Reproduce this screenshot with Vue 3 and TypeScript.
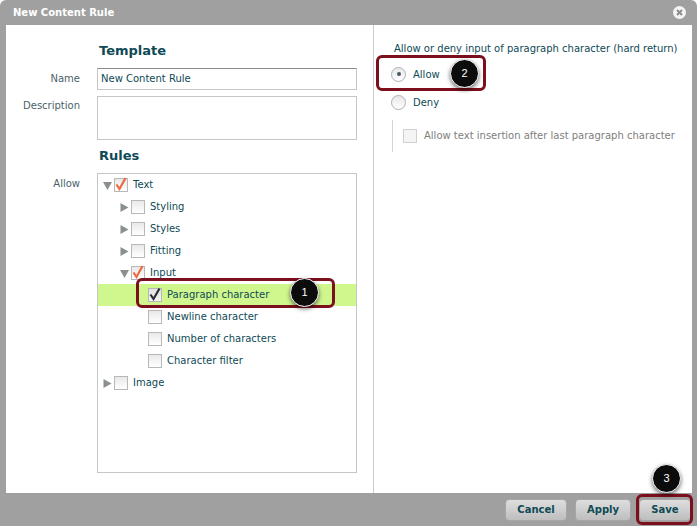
<script setup lang="ts">
interface TreeRow {
  label: string;
  depth: number;
  arrow: 'open' | 'closed' | 'none';
  check: 'none' | 'orange' | 'dark';
  active?: boolean;
}

const rows: TreeRow[] = [
  { label: 'Text', depth: 0, arrow: 'open', check: 'orange' },
  { label: 'Styling', depth: 1, arrow: 'closed', check: 'none' },
  { label: 'Styles', depth: 1, arrow: 'closed', check: 'none' },
  { label: 'Fitting', depth: 1, arrow: 'closed', check: 'none' },
  { label: 'Input', depth: 1, arrow: 'open', check: 'orange' },
  { label: 'Paragraph character', depth: 2, arrow: 'none', check: 'dark', active: true },
  { label: 'Newline character', depth: 2, arrow: 'none', check: 'none' },
  { label: 'Number of characters', depth: 2, arrow: 'none', check: 'none' },
  { label: 'Character filter', depth: 2, arrow: 'none', check: 'none' },
  { label: 'Image', depth: 0, arrow: 'closed', check: 'none' },
];

const indent = (depth: number) => ({ paddingLeft: `${5 + depth * 17}px` });
</script>

<template>
  <div class="dialog">
    <header class="titlebar">
      <span class="title">New Content Rule</span>
      <svg class="close" width="13" height="13" viewBox="0 0 13 13">
        <circle cx="6.5" cy="6.5" r="6.5" fill="#f4f4f4" />
        <path d="M4 4l5 5M9 4l-5 5" stroke="#8c8c8c" stroke-width="2" />
      </svg>
    </header>

    <main class="body">
      <section class="left">
        <h2 class="heading">Template</h2>
        <div class="field">
          <label class="label">Name</label>
          <input class="input" value="New Content Rule" />
        </div>
        <div class="field field-desc">
          <label class="label">Description</label>
          <div class="textarea"></div>
        </div>
        <h2 class="heading heading-rules">Rules</h2>
        <div class="field">
          <label class="label">Allow</label>
          <div class="tree">
            <div
              v-for="row in rows"
              :key="row.label"
              class="row"
              :class="{ active: row.active }"
              :style="indent(row.depth)"
            >
              <span class="arrow-slot">
                <svg v-if="row.arrow === 'open'" width="9" height="9" viewBox="0 0 9 9">
                  <path d="M0 1h9L4.5 9z" fill="#8a9090" />
                </svg>
                <svg v-else-if="row.arrow === 'closed'" width="9" height="9" viewBox="0 0 9 9">
                  <path d="M0.5 0v9l8-4.5z" fill="#8a9090" />
                </svg>
              </span>
              <span class="box" :class="{ 'box-dark': row.check === 'dark' }">
                <svg v-if="row.check === 'orange'" width="14" height="14" viewBox="0 0 14 14">
                  <path d="M2.5 6.5l3 4.5L11.5 0" fill="none" stroke="#f0683f" stroke-width="2.2" />
                </svg>
                <svg v-else-if="row.check === 'dark'" width="14" height="14" viewBox="0 0 14 14">
                  <path d="M2.5 6.5l3 4.5L11.5 0.5" fill="none" stroke="#2b2f33" stroke-width="2.2" />
                </svg>
              </span>
              <span class="row-label">{{ row.label }}</span>
            </div>
          </div>
        </div>
      </section>

      <section class="right">
        <p class="question">Allow or deny input of paragraph character (hard return)</p>
        <div class="radio-row">
          <span class="radio"><i class="dot"></i></span>
          <span>Allow</span>
        </div>
        <div class="radio-row radio-deny">
          <span class="radio"></span>
          <span>Deny</span>
        </div>
        <div class="sub">
          <span class="box box-off"></span>
          <span class="sub-label">Allow text insertion after last paragraph character</span>
        </div>
      </section>
    </main>

    <footer class="footer">
      <button class="btn btn-cancel">Cancel</button>
      <button class="btn btn-apply">Apply</button>
      <button class="btn btn-save">Save</button>
    </footer>

    <!-- callouts sit on top of the screen -->
    <div class="outline o1"></div>
    <div class="outline o2"></div>
    <div class="outline o3"></div>
    <div class="badge b1">1</div>
    <div class="badge b2">2</div>
    <div class="badge b3">3</div>
  </div>
</template>

<style>
html,
body {
  margin: 0;
  background: #fff;
  overflow: hidden;
}
</style>

<style scoped>
.dialog {
  position: relative;
  width: 697px;
  height: 526px;
  display: flex;
  flex-direction: column;
  background: #a0a0a0;
  border-radius: 6px 6px 0 0;
  overflow: hidden;
  font-family: "DejaVu Sans", Verdana, sans-serif;
  font-size: 10px;
  color: #0e4a55;
}

.titlebar {
  height: 25px;
  flex: none;
  display: flex;
  align-items: center;
  justify-content: space-between;
  padding: 0 11px 0 13px;
}

.title {
  color: #fff;
  font-weight: bold;
  font-size: 10px;
}

.body {
  height: 468px;
  flex: none;
  margin: 0 5px 0 6px;
  display: flex;
  background: #fff;
}

.left {
  width: 368px;
  flex: none;
  box-sizing: border-box;
  padding: 18px 16px 0 0;
  border-right: 1px solid #cccccc;
}

.heading {
  margin: 0 0 10px 93px;
  height: 15px;
  line-height: 15px;
  font-size: 13px;
  font-weight: bold;
  color: #0e4a55;
}

.heading-rules {
  margin-top: 8px;
  margin-bottom: 10px;
}

.field {
  display: flex;
  gap: 17px;
  align-items: flex-start;
}

.field-desc {
  margin-top: 6px;
}

.label {
  width: 74px;
  flex: none;
  text-align: right;
  color: #4a6268;
  line-height: 22px;
}

.field-desc .label {
  line-height: 20px;
}

.input {
  width: 260px;
  height: 22px;
  box-sizing: border-box;
  border: 1px solid #c6c6c6;
  border-top-color: #8c8c8c;
  padding: 0 3px 2px;
  font: inherit;
  color: #0e4a55;
  outline: none;
}

.textarea {
  width: 260px;
  height: 44px;
  box-sizing: border-box;
  border: 1px solid #c6c6c6;
}

.tree {
  width: 260px;
  height: 300px;
  box-sizing: border-box;
  border: 1px solid #c6c6c6;
}

.row {
  height: 22px;
  display: flex;
  align-items: center;
}

.row.active {
  background: #d0f78e;
}

.arrow-slot {
  width: 11px;
  flex: none;
  display: flex;
  align-items: center;
}

.box {
  width: 14px;
  height: 14px;
  flex: none;
  box-sizing: border-box;
  border: 1px solid #b8b8b8;
  background: linear-gradient(#e9e9e9, #ffffff);
  display: flex;
  align-items: center;
  justify-content: center;
}

.box svg {
  flex: none;
  overflow: visible;
}

.box-dark {
  background: linear-gradient(#e2e2e2, #f4f4f4);
}

.row-label {
  margin-left: 5px;
  margin-top: -2px;
  white-space: nowrap;
}

.right {
  flex: 1;
  min-width: 0;
  padding: 16px 0 0 20px;
  color: #0e4a55;
}

.question {
  margin: 0;
  line-height: 15px;
  white-space: nowrap;
}

.radio-row {
  display: flex;
  align-items: center;
  gap: 7px;
  height: 16px;
  margin-top: 10px;
  margin-left: -3px;
}

.radio-deny {
  margin-top: 12px;
}

.radio {
  width: 15px;
  height: 15px;
  box-sizing: border-box;
  border: 1px solid #b0b0b0;
  border-radius: 50%;
  background: linear-gradient(#e8e8e8, #fff);
  display: flex;
  align-items: center;
  justify-content: center;
}

.dot {
  width: 4px;
  height: 4px;
  border-radius: 50%;
  background: #4a5860;
}

.sub {
  margin: 10px 0 0 -2px;
  height: 32px;
  border-left: 1px solid #d4d4d4;
  display: flex;
  align-items: center;
  gap: 7px;
  padding-left: 10px;
  color: #7e7e7e;
  white-space: nowrap;
}

.sub-label {
  margin-top: -2px;
}

.box-off {
  background: #f4f4f4;
  border-color: #d0d0d0;
}

.footer {
  flex: 1;
  display: flex;
  justify-content: flex-end;
  align-items: center;
  gap: 8px;
  padding: 0 6px 0 0;
}

.btn {
  height: 22px;
  padding: 0;
  border: 1px solid #a6a6a6;
  border-radius: 4px;
  background: linear-gradient(#dedede, #bebebe);
  font: bold 10px "DejaVu Sans", Verdana, sans-serif;
  color: #0e4a55;
}

.btn-cancel {
  width: 62px;
}

.btn-apply {
  width: 56px;
}

.btn-save {
  width: 52px;
}

.outline {
  position: absolute;
  box-sizing: border-box;
  border: 3px solid #7c0f1c;
  border-radius: 6px;
}

.o1 {
  left: 136px;
  top: 278px;
  width: 199px;
  height: 30px;
}

.o2 {
  left: 376px;
  top: 55px;
  width: 110px;
  height: 36px;
}

.o3 {
  left: 636px;
  top: 494px;
  width: 57px;
  height: 31px;
}

.badge {
  position: absolute;
  width: 27px;
  height: 27px;
  border-radius: 50%;
  background: #0c0c0c;
  border: 1px solid #fff;
  box-shadow: 0 2px 4px rgba(0, 0, 0, 0.55);
  color: #fff;
  font: 11px/27px "Liberation Sans", Arial, sans-serif;
  text-align: center;
}

.b1 {
  left: 290px;
  top: 278px;
}

.b2 {
  left: 450px;
  top: 59px;
}

.b3 {
  left: 652px;
  top: 464px;
}
</style>
